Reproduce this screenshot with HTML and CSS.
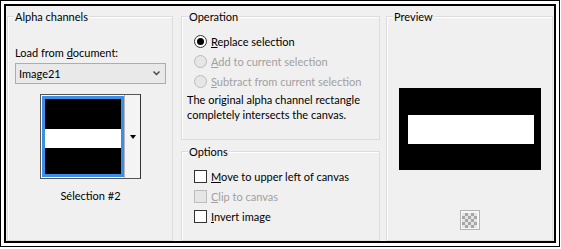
FILE: index.html
```html
<!DOCTYPE html>
<html lang="en">
<head>
  <meta charset="UTF-8">
  <title>Load Selection From Alpha Channel</title>
  <link rel="stylesheet" href="styles.css">
</head>
<body>
  <div class="frame">
    <div class="dialog">

      <div class="group alpha">
        <span class="group-title">Alpha channels</span>
        <div class="field-label">Load from <u>d</u>ocument:</div>
        <div class="combo">
          <span>Image21</span>
          <svg class="chevron" width="7" height="5" viewBox="0 0 7 5">
            <polyline points="0.5,0.5 3.5,3.5 6.5,0.5" fill="none" stroke="#444" stroke-width="1.4"/>
          </svg>
        </div>
        <div class="thumb-picker">
          <div class="thumb"><div class="thumb-band"></div></div>
          <div class="thumb-drop"><span class="tri"></span></div>
        </div>
        <div class="thumb-caption">Sélection #2</div>
      </div>

      <div class="col-mid">
        <div class="group operation">
          <span class="group-title">Operation</span>
          <div class="choice">
            <span class="radio checked"></span>
            <span><u>R</u>eplace selection</span>
          </div>
          <div class="choice disabled">
            <span class="radio"></span>
            <span><u>A</u>dd to current selection</span>
          </div>
          <div class="choice disabled">
            <span class="radio"></span>
            <span><u>S</u>ubtract from current selection</span>
          </div>
          <p class="note">The original alpha channel rectangle<br>completely intersects the canvas.</p>
        </div>

        <div class="group options">
          <span class="group-title">Options</span>
          <div class="choice">
            <span class="check"></span>
            <span><u>M</u>ove to upper left of canvas</span>
          </div>
          <div class="choice disabled">
            <span class="check"></span>
            <span><u>C</u>lip to canvas</span>
          </div>
          <div class="choice">
            <span class="check"></span>
            <span><u>I</u>nvert image</span>
          </div>
        </div>
      </div>

      <div class="group preview">
        <span class="group-title">Preview</span>
        <div class="canvas"><div class="canvas-band"></div></div>
        <div class="checker-btn"><span class="checker"></span></div>
      </div>

    </div>
  </div>
</body>
</html>
```

FILE: styles.css
```css
body {
  margin: 0;
  background-color: #ffffff;
  font-family: 'Lato', 'Liberation Sans', sans-serif;
  font-size: 11px;
  line-height: 15px;
  color: #000000;
}
.frame {
  width: 560px;
  height: 247px;
  box-sizing: border-box;
  border: 1px solid #000000;
  padding: 3px;
}
.dialog {
  height: 100%;
  box-sizing: border-box;
  border: 2px solid #000000;
  background-color: #f0f0f0;
  padding: 10px 1px 0 1px;
  display: flex;
}
.group {
  position: relative;
  box-sizing: border-box;
  border: 1px solid #dcdcdc;
  box-shadow: inset 1px 1px 0 #ffffff;
}
.group-title {
  position: absolute;
  top: -8px;
  left: 6px;
  padding: 0 1px;
  background-color: #f0f0f0;
}
u {
  text-decoration-thickness: 1px;
  text-underline-offset: 1px;
}

/* alpha channels */
.alpha {
  width: 166px;
  height: 225px;
  margin-right: 8px;
  padding: 28px 6px 0 7px;
}
.combo {
  margin-top: 3px;
  height: 21px;
  box-sizing: border-box;
  border: 1px solid #adadad;
  background-color: #e9e9e9;
  display: flex;
  align-items: center;
  justify-content: space-between;
  padding: 0 5px 0 3px;
}
.chevron {
  display: block;
}
.thumb-picker {
  margin: 10px auto 0 auto;
  width: 101px;
  height: 85px;
  box-sizing: border-box;
  border: 1px solid #555555;
  border-right-color: #333333;
  display: flex;
  background-color: #ffffff;
}
.thumb {
  width: 82px;
  height: 81px;
  margin: 1px 0 0 1px;
  box-sizing: border-box;
  border: 3px solid #3d8ee6;
  background-color: #000000;
  padding-top: 30px;
}
.thumb-band {
  height: 19px;
  background-color: #ffffff;
}
.thumb-drop {
  flex: 1;
  border-left: 1px solid #b5b5b5;
  background-color: #f4f4f4;
  display: flex;
  align-items: center;
  justify-content: center;
}
.tri {
  width: 0;
  height: 0;
  border-left: 3px solid transparent;
  border-right: 3px solid transparent;
  border-top: 4px solid #000000;
}
.thumb-caption {
  margin-top: 9px;
  text-align: center;
}

/* operation / options */
.col-mid {
  width: 199px;
  margin-right: 6px;
  display: flex;
  flex-direction: column;
  gap: 11px;
}
.operation {
  height: 124px;
  padding: 14px 4px 0 5px;
}
.options {
  height: 90px;
  padding: 14px 4px 0 5px;
}
.choice {
  height: 20px;
  margin-left: 7px;
  display: flex;
  align-items: center;
  gap: 4px;
}
.choice.disabled {
  color: #a0a0a0;
}
.radio {
  width: 13px;
  height: 13px;
  box-sizing: border-box;
  border: 1px solid #333333;
  border-radius: 50%;
  background-color: #ffffff;
  display: flex;
  align-items: center;
  justify-content: center;
}
.radio.checked::after {
  content: "";
  width: 7px;
  height: 7px;
  border-radius: 50%;
  background-color: #000000;
}
.check {
  width: 13px;
  height: 13px;
  box-sizing: border-box;
  border: 1px solid #333333;
  background-color: #ffffff;
}
.disabled .radio,
.disabled .check {
  border-color: #bcbcbc;
  background-color: #e6e6e6;
}
.note {
  margin: 1px 0 0 0;
  white-space: nowrap;
}

/* preview */
.preview {
  width: 167px;
  height: 225px;
  padding-top: 71px;
  display: flex;
  flex-direction: column;
  align-items: center;
}
.canvas {
  width: 142px;
  height: 82px;
  box-sizing: border-box;
  background-color: #000000;
  padding: 27px 7px 0 9px;
}
.canvas-band {
  height: 29px;
  background-color: #ffffff;
}
.checker-btn {
  margin-top: 40px;
  width: 20px;
  height: 20px;
  box-sizing: border-box;
  border: 1px solid #b4b4b4;
  background-color: #f7f7f7;
  display: flex;
  align-items: center;
  justify-content: center;
}
.checker {
  width: 15px;
  height: 15px;
  background-image: conic-gradient(#a6a6a6 25%, #e4e4e4 0 50%, #a6a6a6 0 75%, #e4e4e4 0);
  background-size: 6px 6px;
}
```
